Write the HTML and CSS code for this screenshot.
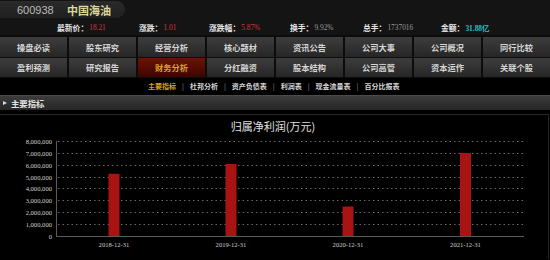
FILE: index.html
```html
<!DOCTYPE html>
<html lang="zh-CN">
<head>
    <meta charset="UTF-8">
    <title>中国海油 - 财务分析</title>
    <link rel="stylesheet" href="styles.css">
</head>
<body>
    <div class="header">
        <div class="stock-tab">
            <span class="stock-code">600938</span>
            <span class="stock-name">中国海油</span>
        </div>
    </div>

    <div class="quote-row">
        <div class="quote-item w82"><b>最新价：</b><span class="val up">18.21</span></div>
        <div class="quote-item w70"><b>涨跌：</b><span class="val up">1.01</span></div>
        <div class="quote-item w81"><b>涨跌幅：</b><span class="val up">5.87%</span></div>
        <div class="quote-item w73"><b>换手：</b><span class="val">9.92%</span></div>
        <div class="quote-item w78"><b>总手：</b><span class="val">1737016</span></div>
        <div class="quote-item"><b>金额：</b><span class="val amount">31.88亿</span></div>
    </div>

    <div class="nav-grid">
        <a class="nav-cell">操盘必读</a>
        <a class="nav-cell">股东研究</a>
        <a class="nav-cell">经营分析</a>
        <a class="nav-cell">核心题材</a>
        <a class="nav-cell">资讯公告</a>
        <a class="nav-cell">公司大事</a>
        <a class="nav-cell">公司概况</a>
        <a class="nav-cell">同行比较</a>
        <a class="nav-cell">盈利预测</a>
        <a class="nav-cell">研究报告</a>
        <a class="nav-cell active">财务分析</a>
        <a class="nav-cell">分红融资</a>
        <a class="nav-cell">股本结构</a>
        <a class="nav-cell">公司高管</a>
        <a class="nav-cell">资本运作</a>
        <a class="nav-cell">关联个股</a>
    </div>

    <div class="sub-nav">
        <a class="sub-link current">主要指标</a><span class="sep">|</span>
        <a class="sub-link">杜邦分析</a><span class="sep">|</span>
        <a class="sub-link">资产负债表</a><span class="sep">|</span>
        <a class="sub-link">利润表</a><span class="sep">|</span>
        <a class="sub-link">现金流量表</a><span class="sep">|</span>
        <a class="sub-link">百分比报表</a>
    </div>

    <div class="section-bar">
        <span class="arrow"></span>
        <span class="section-title">主要指标</span>
    </div>

    <div class="chart-panel">
        <svg class="chart" width="549" height="144" viewBox="0 0 549 144">
            <text class="chart-title" x="273" y="16" text-anchor="middle">归属净利润(万元)</text>

            <!-- grid lines, 1,000,000 = 11.8px -->
            <g class="grid">
                <line x1="58" y1="109.5" x2="524" y2="109.5"/>
                <line x1="58" y1="97.5" x2="524" y2="97.5"/>
                <line x1="58" y1="85.5" x2="524" y2="85.5"/>
                <line x1="58" y1="73.5" x2="524" y2="73.5"/>
                <line x1="58" y1="62.5" x2="524" y2="62.5"/>
                <line x1="58" y1="50.5" x2="524" y2="50.5"/>
                <line x1="58" y1="38.5" x2="524" y2="38.5"/>
                <line x1="58" y1="26.5" x2="524" y2="26.5"/>
            </g>

            <g class="y-labels" text-anchor="end">
                <text x="52" y="123.5">0</text>
                <text x="52" y="111.7">1,000,000</text>
                <text x="52" y="99.9">2,000,000</text>
                <text x="52" y="88.1">3,000,000</text>
                <text x="52" y="76.3">4,000,000</text>
                <text x="52" y="64.5">5,000,000</text>
                <text x="52" y="52.7">6,000,000</text>
                <text x="52" y="40.9">7,000,000</text>
                <text x="52" y="29.1">8,000,000</text>
            </g>

            <g class="bars">
                <rect x="108.5" y="58.8" width="11" height="62.2"/>
                <rect x="225.5" y="49" width="11" height="72"/>
                <rect x="342.5" y="91.5" width="11" height="29.5"/>
                <rect x="460" y="38" width="11" height="83"/>
            </g>

            <line class="axis" x1="56.5" y1="26" x2="56.5" y2="121.5"/>
            <line class="axis" x1="56" y1="121.5" x2="524" y2="121.5"/>

            <g class="x-labels" text-anchor="middle">
                <text x="114" y="131.5">2018-12-31</text>
                <text x="231" y="131.5">2019-12-31</text>
                <text x="348" y="131.5">2020-12-31</text>
                <text x="465.5" y="131.5">2021-12-31</text>
            </g>
        </svg>
    </div>
</body>
</html>
```
FILE: styles.css
```css
* {
    box-sizing: border-box;
    margin: 0;
    padding: 0;
}

body {
    background-color: #000;
    color: #ddd;
    font-family: "Noto Sans CJK SC", "Liberation Sans", sans-serif;
    width: 550px;
    height: 260px;
    overflow: hidden;
}

.header {
    background-color: #141414;
    height: 19px;
    padding-top: 1px;
}

.stock-tab {
    display: flex;
    align-items: center;
    width: 125px;
    height: 17px;
    background: linear-gradient(#2a2a2a, #1f1f1f);
    border-radius: 0 9px 9px 0;
    padding-left: 17px;
}

.stock-code {
    font-family: "Liberation Sans", sans-serif;
    font-size: 11px;
    color: #bbb;
    width: 50px;
}

.stock-name {
    font-size: 11px;
    font-weight: bold;
    color: #dcd79a;
}

.quote-row {
    display: flex;
    align-items: center;
    height: 16px;
    background-color: #141414;
    padding-left: 57px;
    padding-top: 1px;
}

.quote-item {
    display: flex;
    align-items: center;
    font-size: 7.8px;
    white-space: nowrap;
}

.quote-item b {
    color: #e6e6e6;
}

.w82 { width: 82px; }
.w70 { width: 70px; }
.w81 { width: 81px; }
.w73 { width: 73px; }
.w78 { width: 78px; }

.val {
    font-family: "Liberation Serif", serif;
    font-size: 7.4px;
    color: #999;
    margin-left: 1px;
}

.val.up {
    color: #d03838;
}

.val.amount {
    color: #22c4c8;
    font-family: "Liberation Serif", "Noto Sans CJK SC", serif;
    font-weight: bold;
}

.nav-grid {
    display: grid;
    grid-template-columns: repeat(8, 1fr);
    gap: 1px 2px;
    background-color: #0c0c0c;
    padding: 2px 0 1px;
}

.nav-cell {
    display: flex;
    align-items: center;
    justify-content: center;
    height: 19.5px;
    background: linear-gradient(#3d3d3d, #262626);
    color: #d6d6d6;
    font-size: 8.2px;
    font-weight: bold;
    cursor: pointer;
}

.nav-cell.active {
    background: linear-gradient(#6e1204, #3c0600);
    color: #dca226;
}

.sub-nav {
    display: flex;
    align-items: center;
    height: 16px;
    padding-left: 148px;
    font-size: 7px;
    font-weight: bold;
}

.sub-link {
    color: #d8d8d8;
    cursor: pointer;
}

.sub-link.current {
    color: #d4a01c;
}

.sep {
    color: #999;
    font-weight: normal;
    margin: 0 6px;
}

.section-bar {
    display: flex;
    align-items: center;
    height: 15px;
    margin-top: 1px;
    background: linear-gradient(#3c3c3c, #262626);
    border-top: 1px solid #4a4a4a;
}

.arrow {
    width: 0;
    height: 0;
    border-top: 2.5px solid transparent;
    border-bottom: 2.5px solid transparent;
    border-left: 4px solid #ddd;
    margin: 0 4px 0 3px;
}

.section-title {
    color: #e4e4e4;
    font-size: 8.4px;
    font-weight: bold;
}

.chart-panel {
    margin-top: 4px;
    width: 549px;
    height: 145px;
    border-top: 1px solid #262626;
    border-right: 1px solid #262626;
}

.chart {
    display: block;
}

.chart-title {
    fill: #e0e0e0;
    font-size: 11px;
    font-family: "Noto Sans CJK SC", sans-serif;
}

.grid line {
    stroke: #6a6a6a;
    stroke-width: 1;
    stroke-dasharray: 1.5 3;
}

.axis {
    stroke: #5a5a5a;
    stroke-width: 1;
}

.bars rect {
    fill: #a81414;
}

.y-labels text,
.x-labels text {
    fill: #cfcfcf;
    font-family: "Liberation Serif", serif;
    font-size: 6.6px;
}
```
